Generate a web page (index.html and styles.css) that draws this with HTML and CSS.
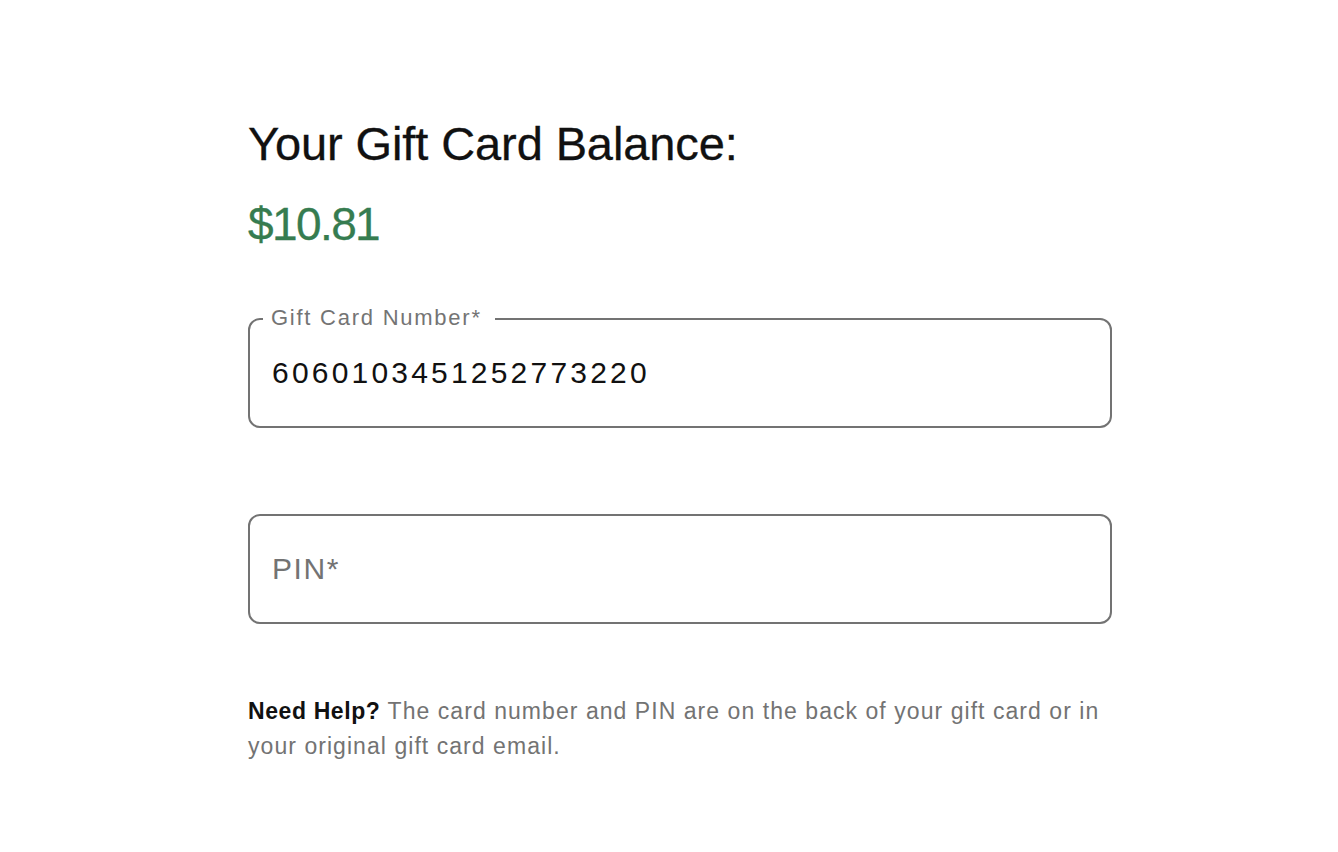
FILE: index.html
```html
<!DOCTYPE html>
<html>
<head>
<meta charset="utf-8">
<link rel="stylesheet" href="styles.css">
</head>
<body>
<main class="page">
  <h1 class="title">Your Gift Card Balance:</h1>
  <div class="amount">$10.81</div>
  <form class="form">
    <div class="field">
      <label class="field-label" for="card">Gift Card Number*</label>
      <input class="field-input" id="card" type="text" value="6060103451252773220">
    </div>
    <div class="field">
      <input class="field-input field-input-empty" type="text" placeholder="PIN*">
    </div>
  </form>
  <p class="help"><strong class="help-strong">Need Help?</strong> The card number and PIN are on the back of your gift card or in your original gift card email.</p>
</main>
</body>
</html>
```
FILE: styles.css
```css
html, body {
  margin: 0;
  padding: 0;
  background: #ffffff;
}
body {
  font-family: "Liberation Sans", Arial, sans-serif;
  color: #111111;
}
.page {
  width: 864px;
  padding: 116px 0 0 248px;
  display: flex;
  flex-direction: column;
}
.title {
  margin: 0;
  font-size: 47px;
  font-weight: 400;
  letter-spacing: -0.1px;
  line-height: 56px;
  color: #111111;
  -webkit-text-stroke: 0.3px #111111;
}
.amount {
  margin-top: 24px;
  font-size: 46px;
  letter-spacing: -1.6px;
  line-height: 56px;
  color: #367c50;
  -webkit-text-stroke: 0.3px #367c50;
}
.form {
  margin-top: 66px;
  display: flex;
  flex-direction: column;
  gap: 86px;
}
.field {
  position: relative;
  border: 2px solid #737373;
  border-radius: 12px;
  padding: 0 22px;
  height: 110px;
  box-sizing: border-box;
  display: flex;
  align-items: center;
}
.field-label {
  position: absolute;
  top: -14px;
  left: 13px;
  padding: 0 13px 0 8px;
  background: #ffffff;
  font-size: 22px;
  line-height: 24px;
  color: #747474;
  letter-spacing: 1.75px;
}
.field-input {
  border: none;
  outline: none;
  padding: 0;
  margin: 0;
  width: 100%;
  font-family: "Liberation Sans", Arial, sans-serif;
  font-size: 30px;
  line-height: 36px;
  letter-spacing: 3.2px;
  color: #111111;
  background: transparent;
}
.field-input-empty {
  letter-spacing: 1.6px;
}
.field-input::placeholder {
  color: #737373;
  letter-spacing: 1.6px;
}
.help {
  margin: 70px 0 0;
  font-size: 23px;
  line-height: 35px;
  color: #737373;
  letter-spacing: 1.05px;
}
.help-strong {
  color: #111111;
  font-weight: 700;
  letter-spacing: 0.6px;
}
```
